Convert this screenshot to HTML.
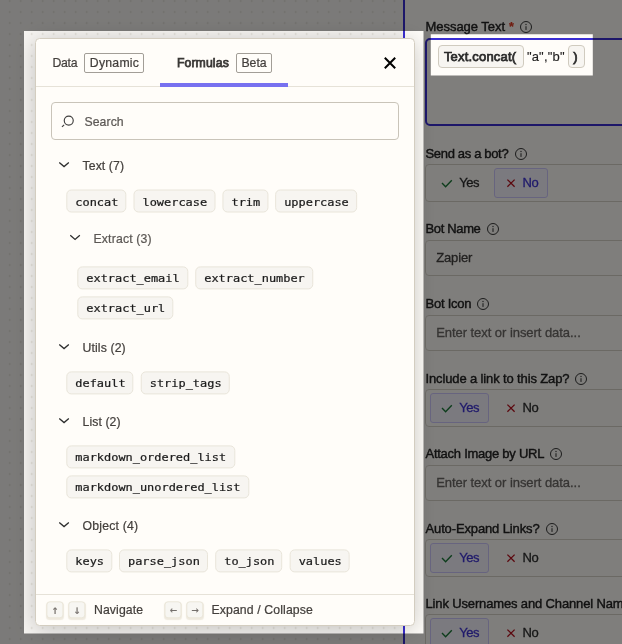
<!DOCTYPE html>
<html><head><meta charset="utf-8"><title>Formulas</title>
<style>
html,body{margin:0;padding:0}
body{width:622px;height:644px;overflow:hidden;position:relative;background:#7b7a78;font-family:"Liberation Sans",Arial,sans-serif;}
#root{position:absolute;left:0;top:0;width:622px;height:644px;overflow:hidden;will-change:transform}
.abs{position:absolute}
.t{position:absolute;white-space:nowrap;font-size:12.25px;line-height:18px;color:#433f3c;-webkit-text-stroke-width:0.22px}
.canvas{position:absolute;left:0;top:0;width:403px;height:644px;background-color:#f7f5f2;
 background-image:radial-gradient(circle, #d6d2c9 0.5px, rgba(214,210,201,0) 1.15px);background-size:11px 11px;background-position:4.25px -4.5px}
.side{position:absolute;left:405px;top:0;width:217px;height:644px;background:#fffdf9}
.vline{position:absolute;left:403px;top:0;width:2px;height:644px;background:#3a2ed2}
.sh{position:absolute;left:35px;top:38px;width:379.5px;height:587.5px;border-radius:5px;box-shadow:0 3px 22px rgba(0,0,0,0.22)}
.panel{position:absolute;left:35px;top:38px;width:377.5px;height:585.5px;background:#fffdf9;border:1px solid #d3cdc0;border-radius:4.5px;}
.hr{position:absolute;left:36px;width:378px;height:1px;background:#e6e2d8}
.badge{position:absolute;box-sizing:border-box;height:19.3px;border:1px solid #a29e97;border-radius:2px;}
.pill{position:absolute;left:0;top:0;box-sizing:border-box;height:23px;padding:1px 0 0 8px;border:1px solid #e9e5da;border-radius:5px;background:#f7f5f1;
 font-family:"DejaVu Sans Mono","Liberation Mono",monospace;font-size:9.9px;line-height:22.4px;color:#1a1a1a;white-space:nowrap;-webkit-text-stroke-width:0.2px}
.pill i{font-style:normal;display:inline-block;transform:scale(1.208,1);transform-origin:0 50%;}
.key{position:absolute;left:0;top:0;box-sizing:border-box;width:17px;height:17px;border:1px solid #ebe7da;border-radius:3.5px;background:#f7f6f2;box-shadow:0 1px 1px rgba(120,100,40,0.12);
 font-family:"DejaVu Sans Mono","DejaVu Sans",monospace;font-size:12px;line-height:16.5px;text-align:center;text-indent:0.6px;color:#75706c;-webkit-text-stroke-width:0.2px}
.box{position:absolute;left:424.5px;width:220px;border:1px solid #d7d3c9;border-radius:4px;background:#fffdf9}
.selbtn{position:absolute;height:27.5px;border:1px solid #cfc8ff;border-radius:3px;background:#f7f5ff}
.lbl{color:#232323;font-size:13px;-webkit-text-stroke-width:0.4px}
.rt{color:#2d2e2e;font-size:13px;-webkit-text-stroke-width:0.3px}
</style></head><body><div id="root">
<div class="canvas"></div>
<div class="side"></div>
<div class="vline"></div>
<div class="sh"></div>

<!-- right sidebar -->
<span id="t1" class="t lbl" style="left:425.5px;top:18px;letter-spacing:-0.039px;">Message Text</span><svg class="abs" style="left:519.1px;top:19.5px" width="14" height="14" viewBox="0 0 14 14"><circle cx="7" cy="7" r="5.5" fill="none" stroke="#2d2e2e" stroke-width="0.95"/><rect x="6.5" y="6.2" width="1" height="3.7" fill="#2d2e2e"/><rect x="6.45" y="3.9" width="1.1" height="1.2" fill="#2d2e2e"/></svg>
<span class="t" style="left:509.1px;top:17.6px;color:#e03a22;font-size:12.5px;font-weight:bold">*</span>
<div class="abs" style="left:425px;top:38px;width:230px;height:84px;border:2px solid #3a2ed2;border-radius:5px;background:#fffdf9"></div>
<span class="abs" style="left:438.1px;top:45.2px;width:83.6px;height:20.6px;border:1px solid #d0cbbf;border-radius:4px;background:#f7f5f1"></span>
<span id="t2" class="t " style="left:443.9px;top:48px;font-size:13px;letter-spacing:0.192px;color:#2b2b2b;-webkit-text-stroke-width:0.75px">Text.concat(</span>
<span id="t3" class="t " style="left:526.9px;top:48px;font-size:13px;letter-spacing:0.181px;color:#201f1f;-webkit-text-stroke-width:0.15px">"a","b"</span>
<span class="abs" style="left:568.2px;top:45.2px;width:14.4px;height:20.6px;border:1px solid #d0cbbf;border-radius:4px;background:#f7f5f1"></span>
<span id="t4" class="t " style="left:573.3px;top:48px;font-size:13px;color:#2b2b2b;-webkit-text-stroke-width:0.75px">)</span>

<span id="t5" class="t lbl" style="left:425.5px;top:145px;letter-spacing:-0.333px;">Send as a bot?</span><svg class="abs" style="left:513.7px;top:146.6px" width="14" height="14" viewBox="0 0 14 14"><circle cx="7" cy="7" r="5.5" fill="none" stroke="#2d2e2e" stroke-width="0.95"/><rect x="6.5" y="6.2" width="1" height="3.7" fill="#2d2e2e"/><rect x="6.45" y="3.9" width="1.1" height="1.2" fill="#2d2e2e"/></svg>
<div class="box" style="top:164px;height:36px"></div><div class="selbtn" style="left:494.3px;top:168.2px;width:51.5px"></div><svg class="abs" style="left:440px;top:176.7px" width="14" height="12" viewBox="0 0 14 12"><path d="M2 6.1 L5.6 9.7 L11.8 3.2" fill="none" stroke="#1b7a38" stroke-width="1.4"/></svg><span id="t6" class="t rt" style="left:459.2px;top:174px;letter-spacing:-0.406px;">Yes</span><svg class="abs" style="left:505px;top:176.8px" width="12" height="12" viewBox="0 0 12 12"><path d="M2.4 2.6 L9.6 9.8 M9.6 2.6 L2.4 9.8" fill="none" stroke="#b8121f" stroke-width="1.3"/></svg><span id="t7" class="t rt" style="left:522.6px;top:174px;letter-spacing:-0.513px;color:#4035d6">No</span>
<span id="t8" class="t lbl" style="left:425.5px;top:220px;letter-spacing:-0.352px;">Bot Name</span><svg class="abs" style="left:485.6px;top:221.6px" width="14" height="14" viewBox="0 0 14 14"><circle cx="7" cy="7" r="5.5" fill="none" stroke="#2d2e2e" stroke-width="0.95"/><rect x="6.5" y="6.2" width="1" height="3.7" fill="#2d2e2e"/><rect x="6.45" y="3.9" width="1.1" height="1.2" fill="#2d2e2e"/></svg>
<div class="box" style="top:240px;height:34px"></div><span id="t9" class="t rt" style="left:436.2px;top:249px;letter-spacing:-0.143px;color:#444240">Zapier</span>
<span id="t10" class="t lbl" style="left:425.5px;top:295px;letter-spacing:-0.238px;">Bot Icon</span><svg class="abs" style="left:476.3px;top:296.6px" width="14" height="14" viewBox="0 0 14 14"><circle cx="7" cy="7" r="5.5" fill="none" stroke="#2d2e2e" stroke-width="0.95"/><rect x="6.5" y="6.2" width="1" height="3.7" fill="#2d2e2e"/><rect x="6.45" y="3.9" width="1.1" height="1.2" fill="#2d2e2e"/></svg>
<div class="box" style="top:315px;height:34px"></div><span id="t11" class="t rt" style="left:436.2px;top:324px;letter-spacing:-0.052px;color:#6c6966">Enter text or insert data...</span>
<span id="t12" class="t lbl" style="left:425.5px;top:370px;letter-spacing:-0.130px;">Include a link to this Zap?</span><svg class="abs" style="left:574.3px;top:371.6px" width="14" height="14" viewBox="0 0 14 14"><circle cx="7" cy="7" r="5.5" fill="none" stroke="#2d2e2e" stroke-width="0.95"/><rect x="6.5" y="6.2" width="1" height="3.7" fill="#2d2e2e"/><rect x="6.45" y="3.9" width="1.1" height="1.2" fill="#2d2e2e"/></svg>
<div class="box" style="top:389px;height:36px"></div><div class="selbtn" style="left:430.3px;top:393.2px;width:56.6px"></div><svg class="abs" style="left:440px;top:401.7px" width="14" height="12" viewBox="0 0 14 12"><path d="M2 6.1 L5.6 9.7 L11.8 3.2" fill="none" stroke="#1b7a38" stroke-width="1.4"/></svg><span id="t13" class="t rt" style="left:459.2px;top:399px;letter-spacing:-0.406px;color:#4035d6">Yes</span><svg class="abs" style="left:505px;top:401.8px" width="12" height="12" viewBox="0 0 12 12"><path d="M2.4 2.6 L9.6 9.8 M9.6 2.6 L2.4 9.8" fill="none" stroke="#b8121f" stroke-width="1.3"/></svg><span id="t14" class="t rt" style="left:522.6px;top:399px;letter-spacing:-0.513px;">No</span>
<span id="t15" class="t lbl" style="left:425.5px;top:445px;letter-spacing:-0.261px;">Attach Image by URL</span><svg class="abs" style="left:549.4px;top:446.6px" width="14" height="14" viewBox="0 0 14 14"><circle cx="7" cy="7" r="5.5" fill="none" stroke="#2d2e2e" stroke-width="0.95"/><rect x="6.5" y="6.2" width="1" height="3.7" fill="#2d2e2e"/><rect x="6.45" y="3.9" width="1.1" height="1.2" fill="#2d2e2e"/></svg>
<div class="box" style="top:465px;height:34px"></div><span id="t16" class="t rt" style="left:436.2px;top:474px;letter-spacing:-0.052px;color:#6c6966">Enter text or insert data...</span>
<span id="t17" class="t lbl" style="left:425.5px;top:520px;letter-spacing:-0.131px;">Auto-Expand Links?</span><svg class="abs" style="left:544.7px;top:521.6px" width="14" height="14" viewBox="0 0 14 14"><circle cx="7" cy="7" r="5.5" fill="none" stroke="#2d2e2e" stroke-width="0.95"/><rect x="6.5" y="6.2" width="1" height="3.7" fill="#2d2e2e"/><rect x="6.45" y="3.9" width="1.1" height="1.2" fill="#2d2e2e"/></svg>
<div class="box" style="top:539px;height:36px"></div><div class="selbtn" style="left:430.3px;top:543.2px;width:56.6px"></div><svg class="abs" style="left:440px;top:551.7px" width="14" height="12" viewBox="0 0 14 12"><path d="M2 6.1 L5.6 9.7 L11.8 3.2" fill="none" stroke="#1b7a38" stroke-width="1.4"/></svg><span id="t18" class="t rt" style="left:459.2px;top:549px;letter-spacing:-0.406px;color:#4035d6">Yes</span><svg class="abs" style="left:505px;top:551.8px" width="12" height="12" viewBox="0 0 12 12"><path d="M2.4 2.6 L9.6 9.8 M9.6 2.6 L2.4 9.8" fill="none" stroke="#b8121f" stroke-width="1.3"/></svg><span id="t19" class="t rt" style="left:522.6px;top:549px;letter-spacing:-0.513px;">No</span>
<span id="t20" class="t lbl" style="left:425.5px;top:595px;letter-spacing:-0.145px;">Link Usernames and Channel Names?</span>
<div class="box" style="top:614px;height:36px"></div><div class="selbtn" style="left:430.3px;top:618.2px;width:56.6px"></div><svg class="abs" style="left:440px;top:626.7px" width="14" height="12" viewBox="0 0 14 12"><path d="M2 6.1 L5.6 9.7 L11.8 3.2" fill="none" stroke="#1b7a38" stroke-width="1.4"/></svg><span id="t21" class="t rt" style="left:459.2px;top:624px;letter-spacing:-0.406px;color:#4035d6">Yes</span><svg class="abs" style="left:505px;top:626.8px" width="12" height="12" viewBox="0 0 12 12"><path d="M2.4 2.6 L9.6 9.8 M9.6 2.6 L2.4 9.8" fill="none" stroke="#b8121f" stroke-width="1.3"/></svg><span id="t22" class="t rt" style="left:522.6px;top:624px;letter-spacing:-0.513px;">No</span>

<!-- dim overlay with two spotlight holes -->
<svg class="abs" style="left:0;top:0" width="622" height="644" viewBox="0 0 622 644"><path fill="#000" fill-opacity="0.5" fill-rule="evenodd" d="M0 0H622V644H0Z M24 31H423.5V633.5H24Z M430.8 34.3H592.8V75.6H430.8Z"/></svg>

<div class="panel"></div>
<span id="t23" class="t " style="left:52.5px;top:54px;letter-spacing:-0.298px;">Data</span>
<div class="badge" style="left:84.2px;top:53.3px;width:59.6px"></div>
<span id="t24" class="t " style="left:89.8px;top:54px;letter-spacing:0.249px;">Dynamic</span>
<span id="t25" class="t " style="left:176.9px;top:54px;letter-spacing:0.117px;color:#3a3836;-webkit-text-stroke-width:0.75px">Formulas</span>
<div class="badge" style="left:236.4px;top:53.3px;width:35.4px"></div>
<span id="t26" class="t " style="left:241.5px;top:54px;letter-spacing:-0.051px;">Beta</span>
<svg class="abs" style="left:383px;top:56px" width="14" height="14" viewBox="0 0 14 14"><path d="M1.8 1.8 L12.2 12.2 M12.2 1.8 L1.8 12.2" stroke="#000" stroke-width="2" fill="none"/></svg>
<div class="hr" style="top:86px"></div>
<div class="abs" style="left:160px;top:82.5px;width:128px;height:4.3px;background:#7771f0"></div>

<div class="abs" style="left:51px;top:102px;width:346px;height:35.5px;border:1px solid #c9c4b9;border-radius:4px;background:#fffdf9"></div>
<svg class="abs" style="left:60px;top:113px" width="16" height="16" viewBox="0 0 16 16"><circle cx="8.75" cy="7.55" r="4.5" fill="none" stroke="#403f3e" stroke-width="1.15"/><path d="M4.1 11.9 L2.0 13.9" stroke="#403f3e" stroke-width="1.2" fill="none"/></svg>
<span id="t27" class="t " style="left:84.4px;top:113px;letter-spacing:0.095px;color:#5c5855">Search</span>

<svg class="abs" style="left:0;top:0;transform:translate(57.90px,160.30px)" width="12" height="10" viewBox="0 0 12 10"><path d="M1.35 2.1 L6.15 6.3 L10.95 2.1" fill="none" stroke="#2d2e2e" stroke-width="1.3"/></svg><span id="t28" class="t " style="left:82.5px;top:157px;letter-spacing:0.095px;">Text (7)</span>
<span class="pill" style="transform:translate(66.30px,189.50px);width:60.0px"><i>concat</i></span>
<span class="pill" style="transform:translate(133.50px,189.50px);width:81.8px"><i>lowercase</i></span>
<span class="pill" style="transform:translate(222.45px,189.50px);width:45.5px"><i>trim</i></span>
<span class="pill" style="transform:translate(275.15px,189.50px);width:81.8px"><i>uppercase</i></span>
<svg class="abs" style="left:0;top:0;transform:translate(68.90px,233.20px)" width="12" height="10" viewBox="0 0 12 10"><path d="M1.35 2.1 L6.15 6.3 L10.95 2.1" fill="none" stroke="#2d2e2e" stroke-width="1.3"/></svg><span id="t29" class="t " style="left:93.5px;top:230px;letter-spacing:0.164px;color:#5c5855">Extract (3)</span>
<span class="pill" style="transform:translate(77.30px,266.40px);width:110.8px"><i>extract_email</i></span>
<span class="pill" style="transform:translate(195.25px,266.40px);width:118.0px"><i>extract_number</i></span>
<span class="pill" style="transform:translate(77.30px,296.40px);width:96.2px"><i>extract_url</i></span>
<svg class="abs" style="left:0;top:0;transform:translate(57.90px,342.30px)" width="12" height="10" viewBox="0 0 12 10"><path d="M1.35 2.1 L6.15 6.3 L10.95 2.1" fill="none" stroke="#2d2e2e" stroke-width="1.3"/></svg><span id="t30" class="t " style="left:82.5px;top:339px;letter-spacing:0.122px;">Utils (2)</span>
<span class="pill" style="transform:translate(66.30px,371.40px);width:67.2px"><i>default</i></span>
<span class="pill" style="transform:translate(140.75px,371.40px);width:89.0px"><i>strip_tags</i></span>
<svg class="abs" style="left:0;top:0;transform:translate(57.90px,416.30px)" width="12" height="10" viewBox="0 0 12 10"><path d="M1.35 2.1 L6.15 6.3 L10.95 2.1" fill="none" stroke="#2d2e2e" stroke-width="1.3"/></svg><span id="t31" class="t " style="left:82.5px;top:413px;letter-spacing:0.093px;">List (2)</span>
<span class="pill" style="transform:translate(66.30px,445.40px);width:168.8px"><i>markdown_ordered_list</i></span>
<span class="pill" style="transform:translate(66.30px,475.40px);width:183.2px"><i>markdown_unordered_list</i></span>
<svg class="abs" style="left:0;top:0;transform:translate(57.90px,520.30px)" width="12" height="10" viewBox="0 0 12 10"><path d="M1.35 2.1 L6.15 6.3 L10.95 2.1" fill="none" stroke="#2d2e2e" stroke-width="1.3"/></svg><span id="t32" class="t " style="left:82.5px;top:517px;letter-spacing:0.202px;">Object (4)</span>
<span class="pill" style="transform:translate(66.30px,549.40px);width:45.5px"><i>keys</i></span>
<span class="pill" style="transform:translate(119.00px,549.40px);width:89.0px"><i>parse_json</i></span>
<span class="pill" style="transform:translate(215.20px,549.40px);width:67.2px"><i>to_json</i></span>
<span class="pill" style="transform:translate(289.65px,549.40px);width:60.0px"><i>values</i></span>

<div class="hr" style="top:594px"></div>
<span class="key" style="transform:translate(46.4px,601.3px)">↑</span>
<span class="key" style="transform:translate(68.3px,601.3px)">↓</span>
<span id="t33" class="t " style="left:94px;top:601px;letter-spacing:0.093px;">Navigate</span>
<span class="key" style="transform:translate(164.5px,601.3px)">←</span>
<span class="key" style="transform:translate(186.3px,601.3px)">→</span>
<span id="t34" class="t " style="left:211.4px;top:601px;letter-spacing:0.127px;">Expand / Collapse</span>
</div></body></html>
